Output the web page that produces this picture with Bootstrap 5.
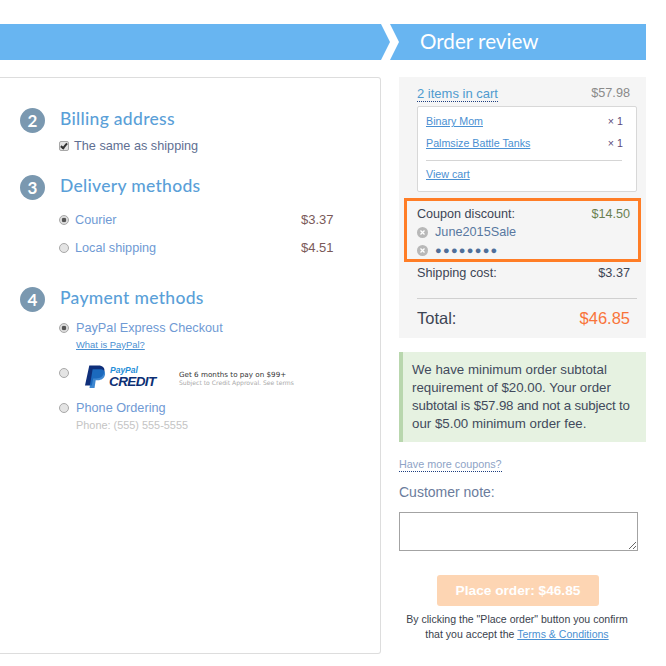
<!DOCTYPE html>
<html lang="en">
<head>
<meta charset="utf-8">
<title>Order review</title>
<link rel="stylesheet" href="https://cdn.jsdelivr.net/npm/bootstrap@5.3.0/dist/css/bootstrap.min.css">
<style>
html,body{background:#fff;overflow:hidden}
body{font-family:"Liberation Sans",Arial,sans-serif;font-size:12.7px;color:#3c4454;height:666px}
.shell{width:646px;padding-top:24px}
.ribbon{height:36px}
.rib-left{width:390px;height:36px;background:#68b5f1;clip-path:polygon(0 0,381px 0,390px 18px,381px 36px,0 36px)}
.rib-right{width:256px;height:36px;background:#68b5f1;clip-path:polygon(0 0,100% 0,100% 100%,0 100%,9px 18px);color:#fff;font:400 20.6px/35px "Lato",sans-serif;padding-left:30px;margin:0}
.main{margin-top:17px}
.checkout{width:381px;height:577px;border:1px solid #ddd;border-left:0;border-radius:0 3px 3px 0;padding:30px 47px 0 20px;flex:none}
.step{height:25px}
.stepnum{width:25px;height:25px;border-radius:50%;background:#7a98b0;color:#fff;font:700 17px/25px "Lato",sans-serif;text-align:center;margin-right:15px;flex:none}
.steptitle{font:500 17.5px/25px "Lato",sans-serif;letter-spacing:.3px;color:#5a9fd8;margin:-4px 0 0}
.optline{padding-left:39px;line-height:16px}
.box{appearance:none;width:10px;height:10px;margin:0;flex:none;background:#e4e4e4;border:1px solid #a8a8a8}
.chk{border-radius:2px;position:relative}
.chk::after{content:"";position:absolute;left:2px;top:0;width:4px;height:7px;border:solid #333;border-width:0 2px 2px 0;transform:rotate(40deg)}
.rad{border-radius:50%}
.rad:checked{background:radial-gradient(circle,#555 0 2px,#dcdcdc 2.6px)}
.optname{color:#6f9ad4}
.plain{color:#5f6f92}
.cost{color:#7a5a5a;width:32px;flex:none;font-size:13px}
.paypal{font-size:9.4px;color:#4a90d2;text-decoration:underline;line-height:12px;margin-left:17px;display:block}
.ppmark{width:70px;height:25px;margin-left:16px;flex:none}
.ppwords{line-height:1;font-family:"Liberation Sans",sans-serif;font-weight:700;font-style:italic}
.ppa{font-size:8.5px;color:#1f8ed8;margin-left:1px;display:block}
.ppb{font-size:13.5px;color:#0c2f74;display:block;margin-top:1px;letter-spacing:-.6px}
.promo{margin-left:24px;font-size:7.2px;line-height:8px;color:#333;font-family:"DejaVu Sans",sans-serif}
.promo span{display:block;color:#a9a9a9;font-size:6.1px}
.phone{color:#c4c4c4;font-size:10.9px;line-height:14px;margin-left:17px;display:block}
.side{width:247px;margin-left:18px;flex:none}
.summary{background:#f5f5f5;height:261px;padding:9px 16px 0 18px}
.rowtop{line-height:15px}
.cartlink{color:#4f9bcf;border-bottom:1px dotted #1d3f80;line-height:15px;display:inline-block;font-size:13px;height:16px}
.muted{color:#8a8a8a}
.cartbox{width:220px;height:86px;margin-top:4px;background:#fff;border:1px solid #d8d8d8;border-radius:2px;padding:7px 8px 0;font-size:10.7px;line-height:14px}
.cartbox a{color:#4a90d2}
.qty{color:#5a4a7a;margin-right:5px}
.cartrule{border-top:1px solid #d5d5d5;margin:10px 6px 6px 0}
.coupon{border:3px solid #ff7d26;width:237px;height:64px;margin:6px 0 0 -13px;padding:5px 8px 0 10px;font-size:12.6px;line-height:17px}
.saved{color:#6a7f50}
.couponcode{color:#5878a0;font-size:12.7px;line-height:18px}
.xmark{width:11px;height:11px;margin-right:7px;flex:none}
.dots{color:#4f6f9a;font-size:11px;letter-spacing:1.3px;line-height:18px}
.shipline{font-size:12.7px;line-height:16px;margin-top:3px}
.sumrule{border-top:1px solid #d0d0d0;margin:17px -7px 10px 0}
.totalline{font-size:16.5px;line-height:19px}
.totalprice{color:#f9743a;font-size:16.5px}
.notice{margin-top:14px;height:90px;background:#e6f2e1;border-left:4px solid #b9d7ae;padding:9px 0 0 9px;font-size:13.3px;line-height:18px;color:#424a5c;white-space:nowrap}
.tightline{letter-spacing:-.16px}
.morelink{margin-top:15px;font-size:10.8px;color:#8ea3c6;border-bottom:1px dotted #1d3f80;line-height:14px;display:inline-block}
.notelabel{color:#6b7c9c;font-size:14px;line-height:18px;margin-top:9px}
.noteinput{display:block;width:239px;height:39px;margin-top:11px;border:1px solid #a3a3a3;padding:2px;resize:both;background:#fff}
.placebtn{width:162px;height:31px;margin:24px 0 0 38px;background:#fdd5b3;border:0;border-radius:3px;color:#fff;font-size:13.7px;font-weight:700;line-height:31px;padding:0;display:block}
.legal{width:236px;margin:6px 0 0;font-size:10.55px;line-height:15px;color:#3a3f4d;text-align:center}
.legal a{color:#4a90d2}
</style>
</head>
<body>
<div class="shell">
  <div class="ribbon d-flex">
    <div class="rib-left"></div>
    <h1 class="rib-right">Order review</h1>
  </div>
  <div class="main d-flex">
    <div class="checkout">
      <div class="step d-flex align-items-center"><div class="stepnum">2</div><h2 class="steptitle">Billing address</h2></div>
      <label class="optline d-flex align-items-center plain" style="margin-top:7px"><input class="box chk" type="checkbox" checked><span class="lh-1" style="margin-left:5px">The same as shipping</span></label>

      <div class="step d-flex align-items-center" style="margin-top:22px"><div class="stepnum">3</div><h2 class="steptitle">Delivery methods</h2></div>
      <div class="optline d-flex align-items-center justify-content-between" style="margin-top:12px"><label class="d-flex align-items-center"><input class="box rad" type="radio" name="ship" checked><span class="optname" style="margin-left:6px">Courier</span></label><span class="cost">$3.37</span></div>
      <div class="optline d-flex align-items-center justify-content-between" style="margin-top:12px"><label class="d-flex align-items-center"><input class="box rad" type="radio" name="ship"><span class="optname" style="margin-left:6px">Local shipping</span></label><span class="cost">$4.51</span></div>

      <div class="step d-flex align-items-center" style="margin-top:31px"><div class="stepnum">4</div><h2 class="steptitle">Payment methods</h2></div>
      <div class="optline d-flex align-items-center" style="margin-top:8px"><input class="box rad" type="radio" name="pay" checked><span class="optname" style="margin-left:7px">PayPal Express Checkout</span></div>
      <div class="optline" style="margin-top:3px"><a class="paypal" href="#">What is PayPal?</a></div>
      <div class="optline d-flex align-items-start" style="margin-top:14px">
        <input class="box rad" type="radio" name="pay" style="margin-top:3px">
        <div class="ppmark d-flex align-items-center">
          <svg width="21" height="24" viewBox="0 0 22 24" class="flex-shrink-0"><path fill="#0f2f7a" d="M4.500 0H14c4.600 0 7 2.400 6.300 6.500-.8 4.500-4 7-8.500 7H8.600L7.200 21H0z"/><path fill="#1d73c9" d="M8 4h8c3 0 5.500 1.500 5 5.500-.6 4-3.800 6-7.500 6h-2.300L10 23.500H4.700z" opacity=".85"/></svg>
          <div class="ppwords" style="margin-left:3px"><span class="ppa">PayPal</span><span class="ppb">CREDIT</span></div>
        </div>
        <div class="promo" style="margin-top:6px">Get 6 months to pay on $99+<span>Subject to Credit Approval. See terms</span></div>
      </div>
      <div class="optline d-flex align-items-center" style="margin-top:10px"><input class="box rad" type="radio" name="pay"><span class="optname" style="margin-left:7px">Phone Ordering</span></div>
      <div class="optline" style="margin-top:2px"><span class="phone">Phone: (555) 555-5555</span></div>
    </div>

    <aside class="side">
      <div class="summary">
        <div class="d-flex justify-content-between rowtop"><a class="cartlink text-decoration-none" href="#">2 items in cart</a><span class="muted">$57.98</span></div>
        <div class="cartbox">
          <div class="d-flex justify-content-between"><a href="#">Binary Mom</a><span class="qty">× 1</span></div>
          <div class="d-flex justify-content-between" style="margin-top:8px"><a href="#">Palmsize Battle Tanks</a><span class="qty">× 1</span></div>
          <div class="cartrule"></div>
          <a href="#">View cart</a>
        </div>
        <div class="coupon">
          <div class="d-flex justify-content-between"><span>Coupon discount:</span><span class="saved">$14.50</span></div>
          <div class="d-flex align-items-center couponcode"><svg class="xmark" viewBox="0 0 11 11"><circle cx="5.500" cy="5.500" r="5.500" fill="#b8b8b8"/><path d="M3.500 3.500l4 4m0-4l-4 4" stroke="#fff" stroke-width="1.300"/></svg>June2015Sale</div>
          <div class="d-flex align-items-center dots"><svg class="xmark" viewBox="0 0 11 11"><circle cx="5.500" cy="5.500" r="5.500" fill="#b8b8b8"/><path d="M3.500 3.500l4 4m0-4l-4 4" stroke="#fff" stroke-width="1.300"/></svg>●●●●●●●●</div>
        </div>
        <div class="shipline d-flex justify-content-between"><span>Shipping cost:</span><span>$3.37</span></div>
        <div class="sumrule"></div>
        <div class="totalline d-flex justify-content-between"><span>Total:</span><span class="totalprice">$46.85</span></div>
      </div>
      <div class="notice">We have minimum order subtotal<br>requirement of $20.00. Your order<br><span class="tightline">subtotal is $57.98 and not a subject to</span><br>our $5.00 minimum order fee.</div>
      <a class="morelink text-decoration-none" href="#">Have more coupons?</a>
      <div class="notelabel">Customer note:</div>
      <textarea class="noteinput" aria-label="Customer note"></textarea>
      <button class="placebtn" type="button">Place order: $46.85</button>
      <div class="legal"><div>By clicking the "Place order" button you confirm</div><div>that you accept the <a href="#">Terms &amp; Conditions</a></div></div>
    </aside>
  </div>
</div>
</body>
</html>
